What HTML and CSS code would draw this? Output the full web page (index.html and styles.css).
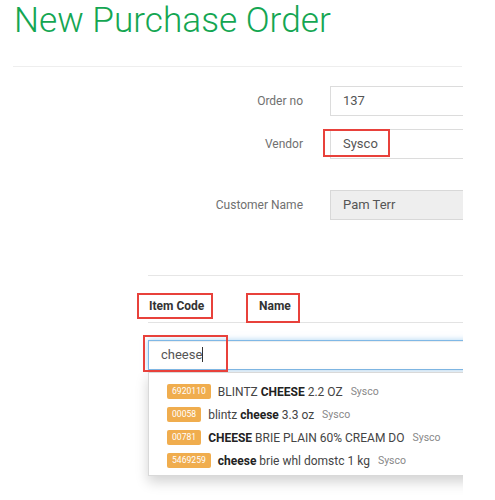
FILE: index.html
```html
<!DOCTYPE html>
<html lang="en">
<head>
<meta charset="utf-8">
<title>New Purchase Order</title>
<link rel="stylesheet" href="styles.css">
</head>
<body>
<div class="page">
  <h1 class="title">New Purchase Order</h1>
  <hr class="rule">
  <form class="form">
    <div class="row">
      <label class="lbl">Order no</label>
      <div class="field"><div class="input">137</div></div>
    </div>
    <div class="row row-vendor">
      <label class="lbl">Vendor</label>
      <div class="field"><div class="input">Sysco</div><span class="mark mark-vendor"></span></div>
    </div>
    <div class="row row-customer">
      <label class="lbl">Customer Name</label>
      <div class="field"><div class="input input-readonly">Pam Terr</div></div>
    </div>
  </form>
  <section class="items">
    <div class="items-head">
      <div class="col col-code">Item Code</div>
      <div class="col col-name">Name</div>
    </div>
    <div class="search">
      <div class="input input-focus">cheese<span class="caret"></span></div>
      <ul class="dropdown">
        <li class="opt"><span class="badge">6920110</span><span class="opt-text">BLINTZ <b>CHEESE</b> 2.2 OZ</span><span class="vendor">Sysco</span></li>
        <li class="opt"><span class="badge">00058</span><span class="opt-text">blintz <b>cheese</b> 3.3 oz</span><span class="vendor">Sysco</span></li>
        <li class="opt"><span class="badge">00781</span><span class="opt-text"><b>CHEESE</b> BRIE PLAIN 60% CREAM DO</span><span class="vendor">Sysco</span></li>
        <li class="opt"><span class="badge">5469259</span><span class="opt-text"><b>cheese</b> brie whl domstc 1 kg</span><span class="vendor">Sysco</span></li>
      </ul>
    </div>
    <span class="mark mark-code"></span>
    <span class="mark mark-name"></span>
    <span class="mark mark-search"></span>
  </section>
</div>
</body>
</html>
```

FILE: styles.css
```css
* { box-sizing: border-box; }

html, body {
  margin: 0;
  padding: 0;
  background: #fff;
}

body {
  font-family: Roboto, "Liberation Sans", sans-serif;
  color: #333;
}

.page {
  width: 463px;
  height: 500px;
  padding-left: 13px;
  overflow: hidden;
}

.title {
  margin: 0;
  padding-left: 1px;
  font-size: 35.2px;
  line-height: 40px;
  font-weight: 300;
  color: #14a652;
  white-space: nowrap;
}

.rule {
  margin: 26px 0 0;
  width: 449px;
  border: 0;
  border-top: 1px solid #eeeeee;
  height: 0;
}

.form {
  margin-top: 19px;
}

.row {
  display: grid;
  grid-template-columns: 290px 200px;
  column-gap: 27px;
  align-items: center;
}

.row-vendor { margin-top: 13px; }
.row-customer { margin-top: 31px; }

.lbl {
  text-align: right;
  font-size: 12px;
  color: #707070;
}

.field {
  position: relative;
}

.input {
  height: 30px;
  line-height: 28px;
  padding-left: 12px;
  border: 1px solid #dcdcdc;
  font-size: 13px;
  color: #555;
  background: #fff;
}

.input-readonly {
  background: #eeeeee;
  border-color: #d8d8d8;
}

.mark {
  position: absolute;
  border: 2px solid #e8413b;
  pointer-events: none;
}

.mark-vendor {
  left: -7px;
  top: 0;
  width: 67px;
  height: 28px;
}

.items {
  position: relative;
  margin-top: 55px;
  margin-left: 135px;
  border-top: 1px solid #e6e6e6;
}

.items-head {
  display: flex;
  padding: 21px 0 7px;
  line-height: 18px;
  font-size: 12px;
  font-weight: 700;
  color: #333;
  border-bottom: 1px solid #e3e3e3;
}

.col-code {
  width: 111px;
  padding-left: 1px;
}

.search {
  margin-top: 17px;
}

.input-focus {
  width: 400px;
  border-color: #7fb8e6;
  box-shadow: inset 0 1px 1px rgba(0,0,0,.075), 0 0 6px rgba(102,175,233,.55);
}

.caret {
  display: inline-block;
  width: 1px;
  height: 15px;
  background: #333;
  vertical-align: -3px;
}

.dropdown {
  list-style: none;
  margin: 2px 0 0;
  padding: 7px 0 3px;
  width: 400px;
  height: 104px;
  border: 1px solid rgba(0,0,0,.15);
  background: #fff;
  box-shadow: 0 6px 12px rgba(0,0,0,.175);
}

.opt {
  display: flex;
  align-items: center;
  height: 23px;
  padding-left: 18px;
  white-space: nowrap;
}

.badge {
  display: inline-block;
  height: 15px;
  line-height: 15px;
  padding: 0 5px;
  border-radius: 2px;
  background: #f0ad4e;
  color: #fff;
  font-size: 8.6px;
  margin-right: 7px;
}

.opt-text {
  font-size: 12px;
  color: #444;
}

.opt-text b {
  color: #222;
  font-weight: 700;
}

.vendor {
  margin-left: 8px;
  font-size: 10.5px;
  color: #888;
}

.mark-code {
  left: -11px;
  top: 17px;
  width: 76px;
  height: 26px;
}

.mark-name {
  left: 98px;
  top: 17px;
  width: 54px;
  height: 30px;
}

.mark-search {
  left: -5px;
  top: 59px;
  width: 85px;
  height: 37px;
}
```
